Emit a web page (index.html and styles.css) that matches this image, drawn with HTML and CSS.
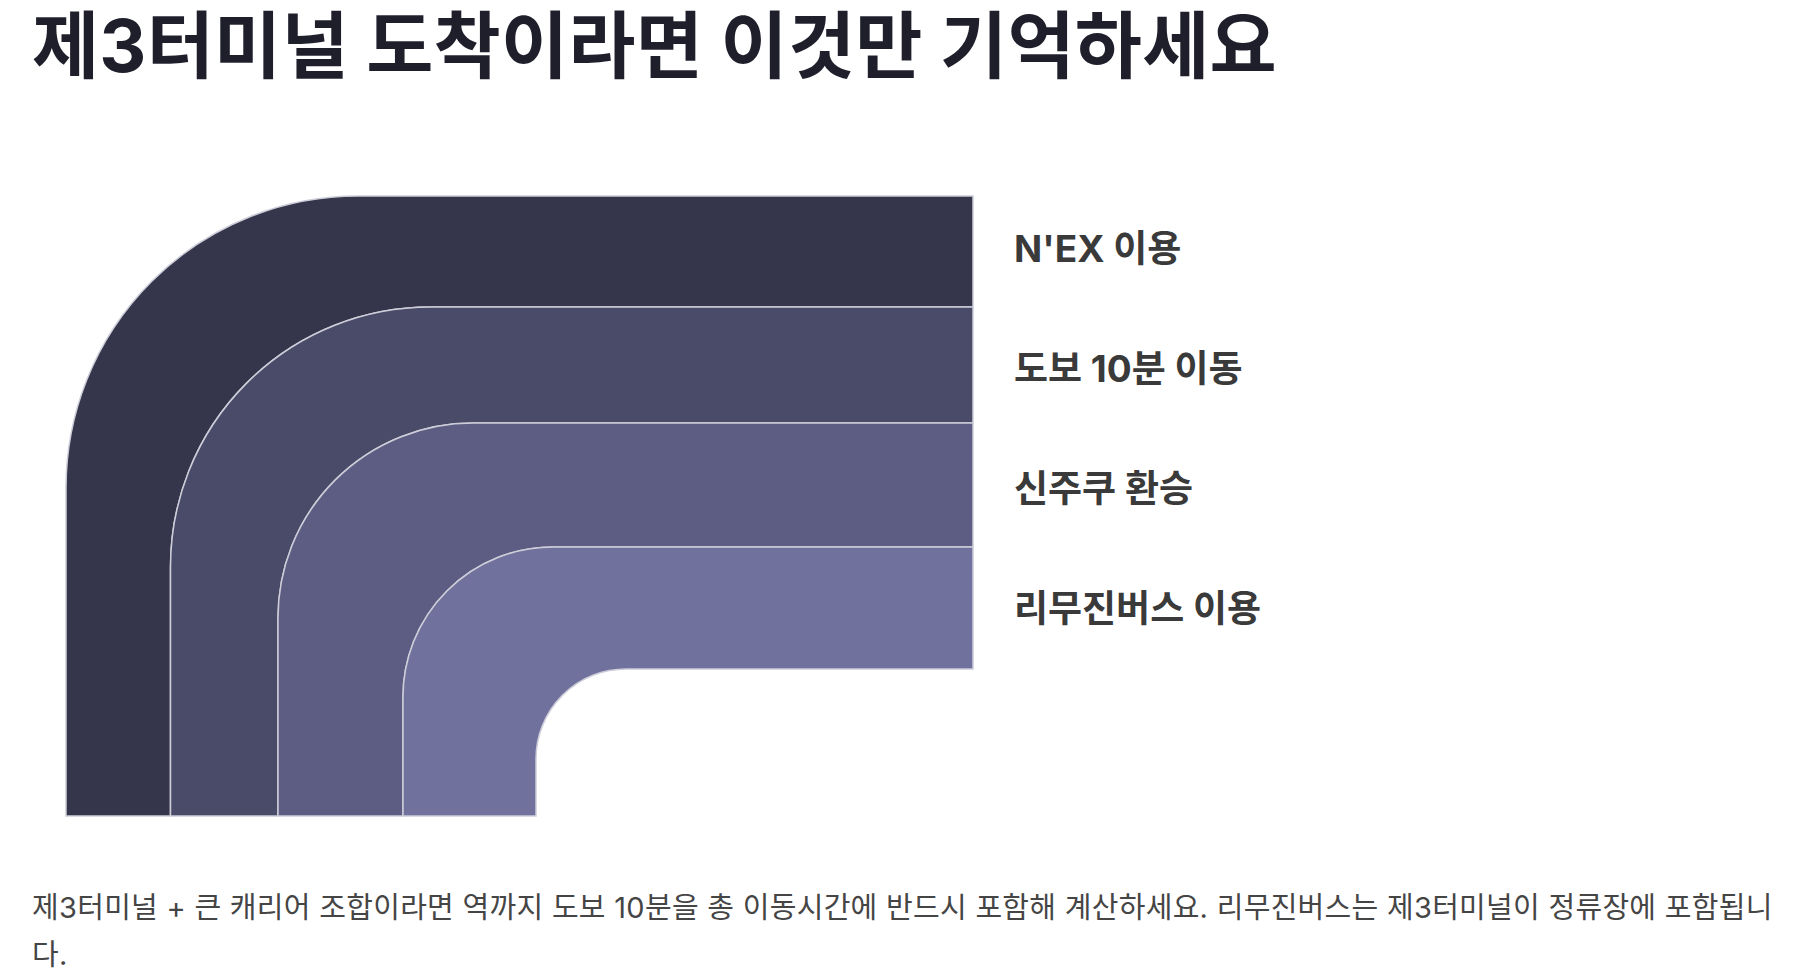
FILE: index.html
```html
<!DOCTYPE html>
<html lang="ko">
<head>
<meta charset="utf-8">
<title>제3터미널 도착이라면 이것만 기억하세요</title>
<link rel="stylesheet" href="styles.css">
</head>
<body>
<main class="page">
  <h1 class="title">제3터미널 도착이라면 이것만 기억하세요</h1>
  <section class="chart">
    <svg class="elbow" width="944" height="632" viewBox="32 190 944 632" aria-hidden="true">
      <path class="band b1" d="M973 196 H358 A292 292 0 0 0 66 488 V816 H170.5 V567 A260 260 0 0 1 430.5 307 H973 Z"/>
      <path class="band b2" d="M973 307 H430.5 A260 260 0 0 0 170.5 567 V816 H278 V618 A195 195 0 0 1 473 423 H973 Z"/>
      <path class="band b3" d="M973 423 H473 A195 195 0 0 0 278 618 V816 H403 V697 A150 150 0 0 1 553 547 H973 Z"/>
      <path class="band b4" d="M973 547 H553 A150 150 0 0 0 403 697 V816 H536 V759 A90 90 0 0 1 626 669 H973 Z"/>
    </svg>
    <ul class="labels">
      <li class="label">N'EX 이용</li>
      <li class="label">도보 10분 이동</li>
      <li class="label">신주쿠 환승</li>
      <li class="label">리무진버스 이용</li>
    </ul>
  </section>
  <p class="note">제3터미널 + 큰 캐리어 조합이라면 역까지 도보 10분을 총 이동시간에 반드시 포함해 계산하세요. 리무진버스는 제3터미널이 정류장에 포함됩니다.</p>
</main>
</body>
</html>
```

FILE: styles.css
```css
html, body {
  margin: 0;
  padding: 0;
  background: #ffffff;
}

body {
  font-family: "Inter", "Noto Sans CJK KR", sans-serif;
}

.page {
  padding: 0 10px 0 32px;
}

.title {
  margin: 0;
  font-size: 73px;
  line-height: 92px;
  font-weight: 700;
  letter-spacing: 0.2px;
  color: #1f1f2c;
}

.chart {
  display: flex;
  align-items: flex-start;
  margin-top: 98px;
}

.elbow {
  display: block;
  flex: none;
}

.band {
  stroke: #cdcdd9;
  stroke-width: 1.5;
}

.b1 { fill: #35354b; }
.b2 { fill: #4a4a69; }
.b3 { fill: #5d5c82; }
.b4 { fill: #71719d; }

.labels {
  list-style: none;
  margin: -4px 0 0 38px;
  padding: 0;
  display: flex;
  flex-direction: column;
}

.label {
  display: flex;
  align-items: center;
  height: 120px;
  font-size: 37px;
  font-weight: 700;
  letter-spacing: 0;
  color: #3a3a3a;
  white-space: nowrap;
}

.note {
  margin: 62px 0 0;
  font-size: 29px;
  line-height: 47px;
  letter-spacing: 0.01em;
  color: #454545;
}
```
